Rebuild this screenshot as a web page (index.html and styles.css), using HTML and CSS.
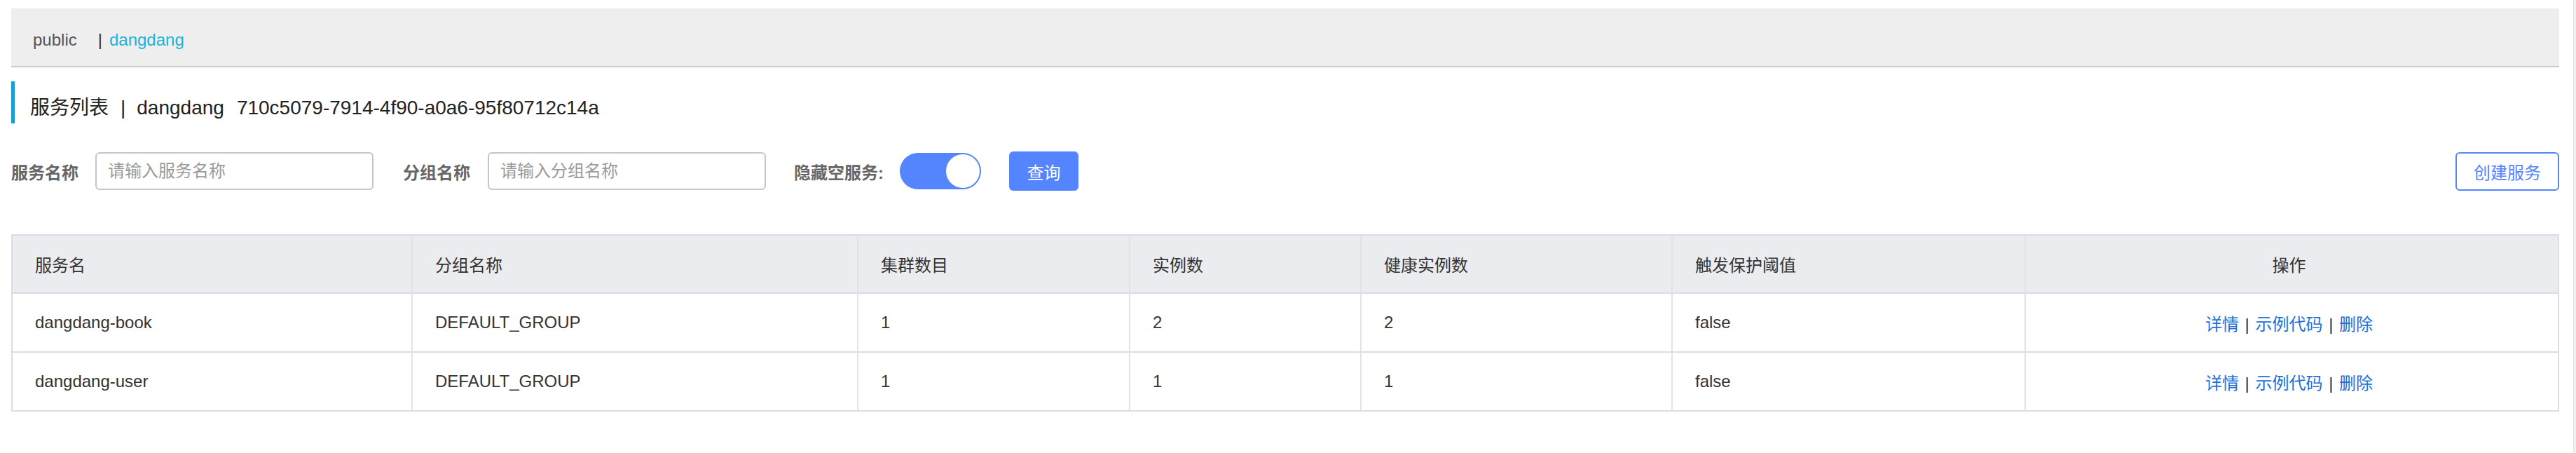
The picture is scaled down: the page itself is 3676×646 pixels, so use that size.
FILE: index.html
```html
<!DOCTYPE html>
<html lang="zh-CN">
<head>
<meta charset="utf-8">
<title>服务列表</title>
<link rel="stylesheet" href="styles.css">
</head>
<body>
<div class="page">
  <div class="ns-bar">
    <span class="ns-item">public</span><span class="ns-sep">|</span><span class="ns-item ns-active">dangdang</span>
  </div>

  <h1 class="page-title">
    <span>服务列表</span><span class="title-sep">|</span><span>dangdang</span><span class="title-id">710c5079-7914-4f90-a0a6-95f80712c14a</span>
  </h1>

  <div class="search-row">
    <label class="field-label">服务名称</label>
    <input class="text-input" type="text" placeholder="请输入服务名称">
    <label class="field-label gap-l">分组名称</label>
    <input class="text-input" type="text" placeholder="请输入分组名称">
    <label class="field-label gap-l2">隐藏空服务:</label>
    <div class="switch"><div class="knob"></div></div>
    <button class="btn-primary">查询</button>
    <button class="btn-outline">创建服务</button>
  </div>

  <table class="svc-table">
    <thead>
      <tr>
        <th class="c1">服务名</th>
        <th class="c2">分组名称</th>
        <th class="c3">集群数目</th>
        <th class="c4">实例数</th>
        <th class="c5">健康实例数</th>
        <th class="c6">触发保护阈值</th>
        <th class="c7 center">操作</th>
      </tr>
    </thead>
    <tbody>
      <tr>
        <td>dangdang-book</td>
        <td>DEFAULT_GROUP</td>
        <td>1</td>
        <td>2</td>
        <td>2</td>
        <td>false</td>
        <td class="center"><a class="op">详情</a> <span class="op-sep">|</span> <a class="op">示例代码</a> <span class="op-sep">|</span> <a class="op">删除</a></td>
      </tr>
      <tr>
        <td>dangdang-user</td>
        <td>DEFAULT_GROUP</td>
        <td>1</td>
        <td>1</td>
        <td>1</td>
        <td>false</td>
        <td class="center"><a class="op">详情</a> <span class="op-sep">|</span> <a class="op">示例代码</a> <span class="op-sep">|</span> <a class="op">删除</a></td>
      </tr>
    </tbody>
  </table>
</div>
<div class="scroll-track"></div>
</body>
</html>
```

FILE: styles.css
```css
html, body {
  margin: 0;
  padding: 0;
  background: #ffffff;
}

body {
  display: flex;
  min-height: 646px;
  font-family: "Liberation Sans", "Noto Sans CJK SC", sans-serif;
  color: #333333;
}

.page {
  flex: 1;
  padding: 12px 20px 0 16px;
}

.scroll-track {
  width: 3px;
  background: #f1f1f1;
  border-left: 1px solid #e4e4e4;
}

/* namespace bar */
.ns-bar {
  height: 74px;
  padding-top: 8px;
  line-height: 74px;
  background: #eeeeee;
  border-bottom: 2px solid #cbcbcb;
  padding-left: 31px;
  font-size: 24px;
  color: #555555;
}

.ns-sep {
  margin: 0 10px 0 30px;
  color: #333333;
}

.ns-active {
  color: #1cb3d8;
}

/* title */
.page-title {
  margin: 20px 0 0 0;
  height: 44px;
  padding: 16px 0 0 22px;
  line-height: 44px;
  border-left: 5px solid #1a9cd9;
  font-size: 28px;
  font-weight: normal;
  color: #222222;
}

.title-sep {
  margin: 0 16px 0 17px;
}

.title-id {
  margin-left: 18px;
}

/* search row */
.search-row {
  display: flex;
  align-items: center;
  height: 56px;
  margin-top: 40px;
}

.field-label {
  font-size: 24px;
  font-weight: bold;
  color: #666666;
  margin-right: 24px;
}

.gap-l {
  margin-left: 42px;
  margin-right: 25px;
}

.gap-l2 {
  margin-left: 40px;
  margin-right: 23px;
}

.text-input {
  box-sizing: border-box;
  width: 397px;
  height: 54px;
  border: 2px solid #c4c6cf;
  border-radius: 6px;
  padding: 0 16px;
  font-family: "Liberation Sans", "Noto Sans CJK SC", sans-serif;
  font-size: 24px;
  color: #333333;
  outline: none;
  background: #ffffff;
}

.text-input::placeholder {
  color: #9a9a9a;
}

.switch {
  box-sizing: border-box;
  width: 116px;
  height: 52px;
  border-radius: 26px;
  background: #5584ff;
  padding: 2px;
  display: flex;
  justify-content: flex-end;
}

.knob {
  width: 48px;
  height: 48px;
  border-radius: 50%;
  background: #ffffff;
}

.btn-primary {
  box-sizing: border-box;
  margin-left: 40px;
  width: 99px;
  height: 56px;
  border: none;
  border-radius: 6px;
  background: #5584ff;
  color: #ffffff;
  font-family: "Liberation Sans", "Noto Sans CJK SC", sans-serif;
  font-size: 24px;
  padding: 0;
}

.btn-outline {
  box-sizing: border-box;
  margin-left: auto;
  width: 148px;
  height: 55px;
  border: 2px solid #5584ff;
  border-radius: 6px;
  background: #ffffff;
  color: #5584ff;
  font-family: "Liberation Sans", "Noto Sans CJK SC", sans-serif;
  font-size: 24px;
  padding: 0;
}

/* table */
.svc-table {
  margin-top: 62px;
  width: 3636px;
  table-layout: fixed;
  border-collapse: separate;
  border-spacing: 0;
  border-top: 2px solid #dcdde1;
  border-left: 2px solid #dcdde1;
  font-size: 24px;
  color: #333333;
}

.svc-table th,
.svc-table td {
  box-sizing: border-box;
  text-align: left;
  padding: 0 0 0 32px;
  border-right: 2px solid #e2e3e7;
  border-bottom: 2px solid #dcdde1;
  white-space: nowrap;
}

.svc-table th {
  height: 83px;
  background: #ebecf0;
  font-weight: normal;
}

.svc-table td {
  height: 84px;
  background: #ffffff;
}

.svc-table .center {
  text-align: center;
  padding: 0 8px 0 0;
}

.svc-table th:last-child,
.svc-table td:last-child {
  border-right-color: #dcdde1;
}

.c1 { width: 571px; }
.c2 { width: 636px; }
.c3 { width: 388px; }
.c4 { width: 330px; }
.c5 { width: 444px; }
.c6 { width: 504px; }
.c7 { width: 761px; }

.op {
  color: #1d6fd8;
  text-decoration: none;
}

.op-sep {
  margin: 0 2px;
  color: #333333;
}
```
